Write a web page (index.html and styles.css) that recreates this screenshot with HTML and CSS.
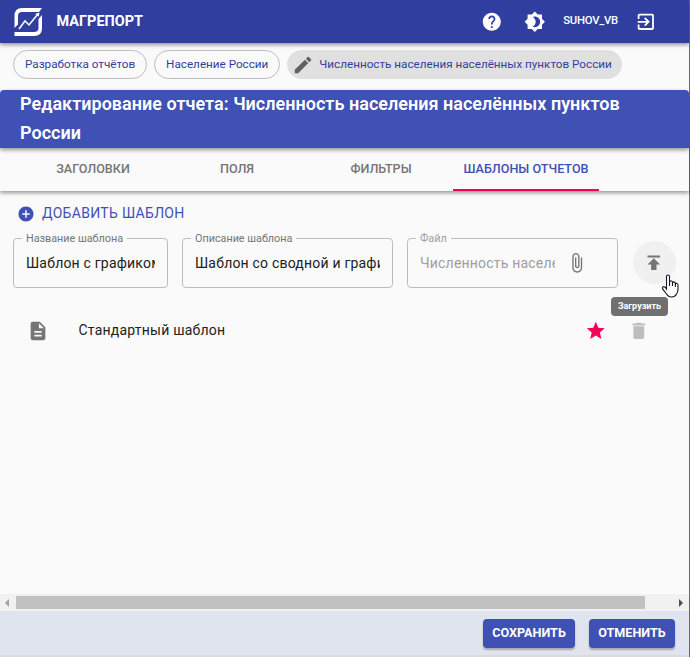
FILE: index.html
```html
<!DOCTYPE html>
<html lang="ru">
<head>
<meta charset="utf-8">
<title>Магрепорт</title>
<link rel="stylesheet" href="styles.css">
</head>
<body>
<div class="app">
  <header class="appbar">
    <svg class="logo" viewBox="0 0 28 28"><path d="M28 0H8Q.5 0 .5 8V20L4 16.500V8Q4 4 8 4H25ZM.5 28H20Q28 28 28 20V7L24.500 11V20Q24.500 24 20 24H.5Z" fill="#fff"/><path d="M5 21L11 13L15 17L24 6" fill="none" stroke="#fff" stroke-width="1.5"/><path d="M25.500 4.500l-.8 4.300-3.500-2.800z" fill="#fff"/></svg>
    <span class="brand">МАГРЕПОРТ</span>
    <span class="grow"></span>
    <svg class="icon help" viewBox="0 0 24 24"><path d="M12 2C6.48 2 2 6.48 2 12s4.48 10 10 10 10-4.48 10-10S17.52 2 12 2zm1 17h-2v-2h2v2zm2.070-7.750l-.9.920C13.450 12.900 13 13.500 13 15h-2v-.5c0-1.100.45-2.100 1.170-2.830l1.240-1.260c.37-.36.590-.86.590-1.410 0-1.100-.9-2-2-2s-2 .9-2 2H8c0-2.210 1.790-4 4-4s4 1.790 4 4c0 .88-.36 1.680-.930 2.250z"/></svg>
    <svg class="icon theme" viewBox="0 0 24 24"><path d="M20 8.690V4h-4.690L12 .69 8.690 4H4v4.690L.69 12 4 15.310V20h4.690L12 23.310 15.310 20H20v-4.690L23.310 12 20 8.690zM12 18c-.89 0-1.740-.2-2.500-.55C11.560 16.500 13 14.420 13 12s-1.440-4.500-3.500-5.450C10.260 6.200 11.110 6 12 6c3.310 0 6 2.690 6 6s-2.690 6-6 6z"/></svg>
    <span class="user">SUHOV_VB</span>
    <svg class="icon exit" viewBox="0 0 24 24"><path d="M10.090 15.590L11.500 17l5-5-5-5-1.410 1.410L12.670 11H3v2h9.670l-2.580 2.590zM19 3H5c-1.110 0-2 .9-2 2v4h2V5h14v14H5v-4H3v4c0 1.100.89 2 2 2h14c1.100 0 2-.9 2-2V5c0-1.100-.9-2-2-2z"/></svg>
  </header>
  <nav class="crumbs">
    <span class="chip">Разработка отчётов</span>
    <span class="chip">Население России</span>
    <span class="chip active"><svg class="pen" viewBox="0 0 24 24"><path d="M3 17.250V21h3.750L17.810 9.940l-3.750-3.750L3 17.250zM20.710 7.040c.39-.39.39-1.020 0-1.410l-2.340-2.340c-.39-.39-1.020-.39-1.410 0l-1.830 1.830 3.750 3.750 1.830-1.830z"/></svg>Численность населения населённых пунктов России</span>
  </nav>
  <h1 class="title">Редактирование отчета: Численность населения населённых пунктов России</h1>
  <div class="tabs">
    <span class="tab">ЗАГОЛОВКИ</span>
    <span class="tab">ПОЛЯ</span>
    <span class="tab">ФИЛЬТРЫ</span>
    <span class="tab selected">ШАБЛОНЫ ОТЧЕТОВ</span>
  </div>
  <main class="content">
    <div class="add"><svg viewBox="0 0 24 24"><path d="M12 2C6.480 2 2 6.480 2 12s4.480 10 10 10 10-4.480 10-10S17.520 2 12 2zm5 11h-4v4h-2v-4H7v-2h4V7h2v4h4v2z"/></svg><span>ДОБАВИТЬ ШАБЛОН</span></div>
    <div class="form">
      <fieldset class="field name"><legend>Название шаблона</legend><div class="value">Шаблон с графиком</div></fieldset>
      <fieldset class="field desc"><legend>Описание шаблона</legend><div class="value">Шаблон со сводной и графиком</div></fieldset>
      <fieldset class="field file"><legend>Файл</legend><div class="value">Численность населения</div><svg class="clip" viewBox="0 0 24 24"><path d="M16.500 6v11.500c0 2.210-1.790 4-4 4s-4-1.790-4-4V5c0-1.380 1.120-2.500 2.500-2.500s2.500 1.120 2.500 2.500v10.500c0 .55-.45 1-1 1s-1-.45-1-1V6H10v9.500c0 1.380 1.120 2.500 2.500 2.500s2.500-1.120 2.500-2.500V5c0-2.210-1.790-4-4-4S7 2.790 7 5v12.500c0 3.040 2.460 5.500 5.500 5.500s5.500-2.460 5.500-5.500V6h-1.500z"/></svg></fieldset>
      <div class="upload">
        <svg class="arrow" viewBox="0 0 24 24"><path d="M5 4v2h14V4H5zm0 10h4v6h6v-6h4l-7-7-7 7z"/></svg>
        <div class="tooltip">Загрузить</div>
        <svg class="cursor" viewBox="0 0 18 24"><path d="M5.500 14V2.500Q5.500 1 7 1T8.500 2.500V8Q9 6.500 10.500 7Q11.500 7.300 11.500 8.500Q12.500 7.500 13.700 8.200Q14.400 8.700 14.400 9.500Q16.800 9 17 11V15Q17 18 15.500 20Q14 23 10.500 23Q7.500 23 5.500 20L1.500 14.700Q1 13.300 2.200 12.700Q4 12.300 5.500 15Z"/><path d="M8.500 8v4M11.500 8.500V12M14.400 9.500V13"/></svg>
      </div>
    </div>
    <div class="row">
      <svg class="doc" viewBox="0 0 24 24"><path d="M14 2H6c-1.100 0-1.990.9-1.990 2L4 20c0 1.100.89 2 1.990 2H18c1.100 0 2-.9 2-2V8l-6-6zm2 16H8v-2h8v2zm0-4H8v-2h8v2zm-3-5V3.500L18.500 9H13z"/></svg>
      <span class="row-name">Стандартный шаблон</span>
      <svg class="star" viewBox="0 0 24 24"><path d="M12 17.270L18.180 21l-1.640-7.030L22 9.240l-7.190-.61L12 2 9.190 8.630 2 9.240l5.460 4.730L5.820 21z"/></svg>
      <svg class="trash" viewBox="0 0 24 24"><path d="M6 19c0 1.100.9 2 2 2h8c1.100 0 2-.9 2-2V7H6v12zM19 4h-3.500l-1-1h-5l-1 1H5v2h14V4z"/></svg>
    </div>
  </main>
  <div class="scrollbar"><span class="left"></span><span class="thumb"></span><span class="right"></span></div>
  <footer class="footer"><button>СОХРАНИТЬ</button><button>ОТМЕНИТЬ</button></footer>
</div>
</body>
</html>
```

FILE: styles.css
```css
* { box-sizing: border-box; }
body { margin: 0; background: #fafafa; font-family: Roboto, "Liberation Sans", sans-serif; overflow: hidden; }
svg { display: block; flex: none; overflow: visible; }
.app { width: 690px; height: 657px; display: flex; flex-direction: column; border-right: 1px solid #68696d; }
.appbar { height: 43px; flex: none; display: flex; align-items: center; padding: 0 32px 0 14px; background: #303f9f; color: #fff; box-shadow: 0 2px 4px #0006; z-index: 1; }
.logo { width: 28px; height: 28px; margin-top: 1px; }
.brand { margin-left: 14.5px; font-size: 14.4px; font-weight: 700; letter-spacing: .05px; }
.grow { flex: 1; }
.icon { width: 21.6px; height: 21.6px; fill: #fff; }
.theme { margin-left: 22px; }
.user { margin: -3px 17.5px 0 17.5px; font-size: 11.3px; font-weight: 500; letter-spacing: -.25px; }
.crumbs { height: 47px; flex: none; display: flex; gap: 7px; padding: 7px 13px; }
.chip { height: 29px; display: flex; align-items: center; padding: 0 11px 2px; border: 1px solid #bdbdbd; border-radius: 15px; font-size: 11.7px; color: #303f9f; white-space: nowrap; }
.chip.active { background: #e0e0e0; border-color: #e0e0e0; padding: 0 9px 2px 4px; }
.pen { width: 22px; height: 22px; margin: 2px 5px 0 0; fill: #616161; }
.title { height: 58px; flex: none; margin: 0; padding: 0 20px; border-radius: 4px 4px 0 0; background: #3f51b5; color: #fff; font-size: 18px; line-height: 28.8px; font-weight: 600; letter-spacing: .02px; box-shadow: 0 2px 4px #0006; z-index: 1; }
.tabs { height: 43px; flex: none; display: flex; padding-left: 21px; font-size: 12.6px; font-weight: 500; letter-spacing: 0; color: #757575; box-shadow: 0 2px 4px #0006; }
.tab { width: 144px; padding-top: 13px; text-align: center; line-height: 16px; }
.selected { width: 146px; color: #3f51b5; border-bottom: 2px solid #f50057; }
.content { flex: 1; padding: 12px 13px 0; }
.add { display: flex; align-items: center; height: 20px; padding-left: 4px; gap: 7px; color: #3f51b5; font-size: 14px; letter-spacing: .31px; }
.add svg { width: 18px; height: 18px; margin-top: 2px; fill: #3f51b5; }
.form { display: flex; margin-top: 9px; height: 56px; }
.field { position: relative; height: 56px; min-width: 0; margin: 0; padding: 0 12px; border: 1px solid #bdbdbd; border-radius: 4px; }
.name { width: 155px; }
.desc { width: 211px; margin-left: 14px; }
.file { width: 211px; margin-left: 14px; display: flex; }
legend { height: 12px; margin-left: -4px; padding: 0 4px; font-size: 10.8px; line-height: 13px; color: #757575; letter-spacing: 0; }
.value { height: 22px; margin-top: 8px; font-size: 14px; line-height: 22px; letter-spacing: .2px; white-space: nowrap; overflow: hidden; color: #212121; }
.file .value { width: 135px; color: #9e9e9e; }
.file legend { color: #9e9e9e; }
.clip { width: 21.6px; height: 21.6px; margin: 8px 0 0 11px; fill: #757575; }
.upload { position: relative; width: 43px; height: 43px; margin: 9px 0 0 15px; padding: 10.5px 10px; border-radius: 50%; background: #f0f0f0; }
.arrow { width: 21.6px; height: 21.6px; fill: #757575; }
.tooltip { position: absolute; top: 56px; left: -22px; width: 57px; height: 19px; border-radius: 4px; background: #707070; color: #fff; font-size: 9px; line-height: 18px; font-weight: 700; text-align: center; }
.cursor { position: absolute; left: 28px; top: 33px; width: 18px; height: 24px; fill: #fff; stroke: #15152b; stroke-width: 1.1; }
.row { display: flex; align-items: center; height: 22px; margin-top: 32px; padding-left: 14px; }
.doc { width: 22px; height: 22px; fill: #757575; }
.row-name { flex: 1; margin: -2px 0 0 29.5px; font-size: 14px; letter-spacing: .22px; color: #212121; }
.star { width: 21.6px; height: 21.6px; margin-right: 21.5px; fill: #f50057; }
.trash { width: 21.6px; height: 21.6px; margin-right: 26.5px; fill: #bdbdbd; }
.scrollbar { height: 17px; flex: none; display: flex; align-items: center; padding: 0 6px 0 5px; background: #f1f1f1; }
.left { border: 4px solid transparent; border-left: 0; border-right-color: #a3a3a3; }
.thumb { width: 629px; height: 13px; margin: 0 auto 0 7px; background: #c1c1c1; }
.right { border: 4px solid transparent; border-right: 0; border-left-color: #505050; }
.footer { height: 46px; flex: none; display: flex; justify-content: flex-end; gap: 14px; padding: 8px 14px; background: #e0e4ef; border-bottom: 2px solid #d9dade; }
.footer button { width: 86px; height: 29px; border: 0; border-radius: 4px; padding: 0 0 2px; background: #3f51b5; color: #fff; font: 700 12.6px Roboto, sans-serif; box-shadow: 0 2px 2px #0004; }
.footer button:first-child { width: 92px; }
```
